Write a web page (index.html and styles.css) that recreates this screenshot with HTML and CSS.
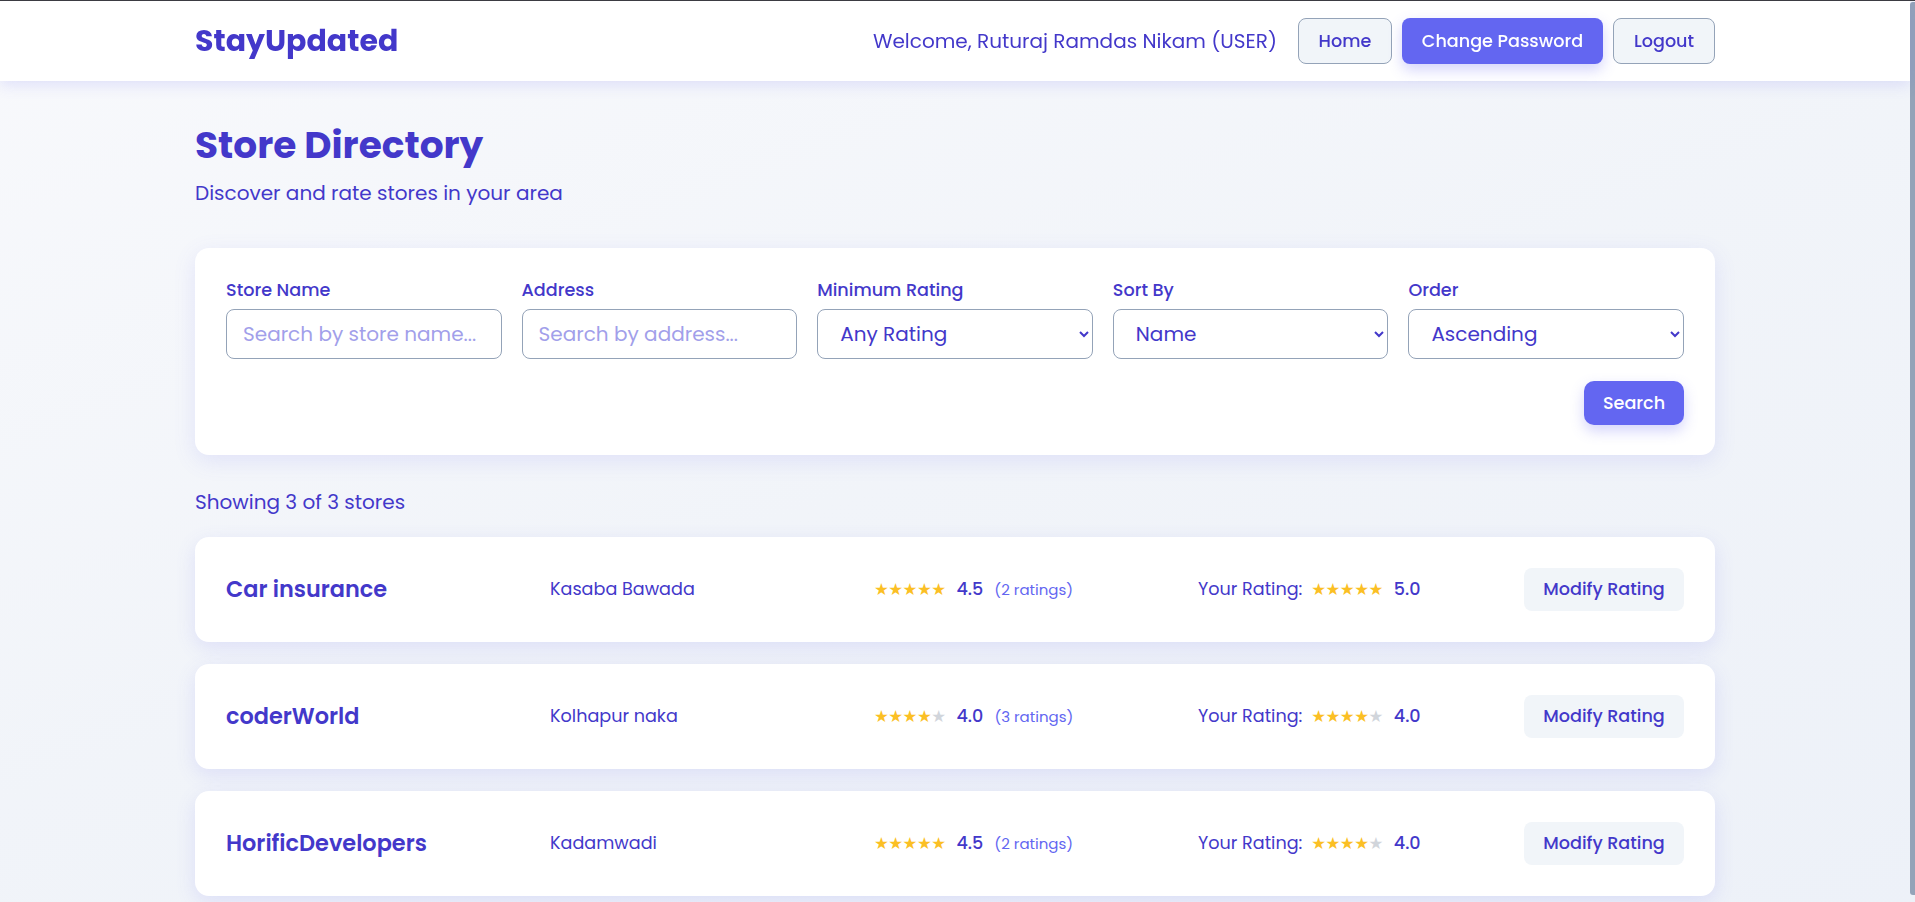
FILE: index.html
```html
<!DOCTYPE html>
<html lang="en">
<head>
<meta charset="utf-8">
<title>StayUpdated - Store Directory</title>
<link rel="stylesheet" href="styles.css">
</head>
<body>
<header class="navbar">
  <div class="nav-inner">
    <div class="logo">StayUpdated</div>
    <div class="nav-right">
      <span class="welcome">Welcome, Ruturaj Ramdas Nikam (USER)</span>
      <button class="btn btn-outline btn-home">Home</button>
      <button class="btn btn-primary btn-pass">Change Password</button>
      <button class="btn btn-outline btn-logout">Logout</button>
    </div>
  </div>
</header>

<main class="container">
  <h1 class="title">Store Directory</h1>
  <p class="subtitle">Discover and rate stores in your area</p>

  <section class="filter-card">
    <div class="filter-grid">
      <div class="field">
        <label class="label">Store Name</label>
        <input class="input" type="text" placeholder="Search by store name...">
      </div>
      <div class="field">
        <label class="label">Address</label>
        <input class="input" type="text" placeholder="Search by address...">
      </div>
      <div class="field">
        <label class="label">Minimum Rating</label>
        <select class="input select"><option>Any Rating</option></select>
      </div>
      <div class="field">
        <label class="label">Sort By</label>
        <select class="input select"><option>Name</option></select>
      </div>
      <div class="field">
        <label class="label">Order</label>
        <select class="input select"><option>Ascending</option></select>
      </div>
    </div>
    <div class="filter-actions">
      <button class="btn btn-primary btn-search">Search</button>
    </div>
  </section>

  <p class="count">Showing 3 of 3 stores</p>

  <div class="store-list">
    <div class="store-card">
      <div class="store-name">Car insurance</div>
      <div class="store-address">Kasaba Bawada</div>
      <div class="rating"><span class="stars">★★★★★</span><span class="rating-value">4.5</span><span class="rating-count">(2 ratings)</span></div>
      <div class="your-rating"><span class="your-label">Your Rating:</span><span class="stars">★★★★★</span><span class="rating-value">5.0</span></div>
      <button class="btn btn-modify">Modify Rating</button>
    </div>
    <div class="store-card">
      <div class="store-name">coderWorld</div>
      <div class="store-address">Kolhapur naka</div>
      <div class="rating"><span class="stars">★★★★<span class="empty">★</span></span><span class="rating-value">4.0</span><span class="rating-count">(3 ratings)</span></div>
      <div class="your-rating"><span class="your-label">Your Rating:</span><span class="stars">★★★★<span class="empty">★</span></span><span class="rating-value">4.0</span></div>
      <button class="btn btn-modify">Modify Rating</button>
    </div>
    <div class="store-card">
      <div class="store-name">HorificDevelopers</div>
      <div class="store-address">Kadamwadi</div>
      <div class="rating"><span class="stars">★★★★★</span><span class="rating-value">4.5</span><span class="rating-count">(2 ratings)</span></div>
      <div class="your-rating"><span class="your-label">Your Rating:</span><span class="stars">★★★★<span class="empty">★</span></span><span class="rating-value">4.0</span></div>
      <button class="btn btn-modify">Modify Rating</button>
    </div>
  </div>
</main>
<div class="scroll-thumb"></div>
</body>
</html>
```
FILE: styles.css
```css
html {
  border-top: 1px solid #3b3b42;
  overflow: hidden;
}
* {
  box-sizing: border-box;
}
body {
  margin: 0;
  padding-right: 5px;
  min-height: 901px;
  font-family: "Poppins", "Inter", "Liberation Sans", sans-serif;
  color: #4338ca;
  background: linear-gradient(160deg, #f8f9fc 0%, #f1f4f9 50%, #edf1f8 100%);
}
.scroll-thumb {
  position: fixed;
  top: 2px;
  right: 0;
  width: 5px;
  height: 893px;
  background: #94a3b8;
  border-radius: 3px 0 0 3px;
}
.navbar {
  height: 80px;
  background: #ffffff;
  box-shadow: 0 4px 14px rgba(99, 102, 241, 0.16);
  position: relative;
  z-index: 1;
}
.nav-inner {
  max-width: 1600px;
  height: 100%;
  margin: 0 auto;
  padding: 0 40px;
  display: flex;
  align-items: center;
  justify-content: space-between;
}
.logo {
  font-size: 30px;
  font-weight: 700;
  color: #4338ca;
}
.nav-right {
  display: flex;
  align-items: center;
  gap: 10px;
}
.welcome {
  font-size: 20px;
  color: #4338ca;
  margin-right: 11px;
}
.btn {
  font-family: inherit;
  font-size: 17.6px;
  font-weight: 500;
  border-radius: 8px;
  cursor: pointer;
  padding: 0;
}
.btn-outline {
  height: 46px;
  background: #f1f5f9;
  color: #4338ca;
  border: 1px solid #94a3b8;
}
.btn-home { width: 94px; }
.btn-logout { width: 102px; }
.btn-primary {
  background: #6366f1;
  color: #ffffff;
  border: none;
  box-shadow: 0 6px 14px rgba(99, 102, 241, 0.28);
}
.btn-pass {
  height: 46px;
  width: 201px;
}
.container {
  max-width: 1600px;
  margin: 0 auto;
  padding: 0 40px 15px;
}
.title {
  margin: 0;
  padding-top: 39px;
  font-size: 37.5px;
  line-height: 50px;
  font-weight: 700;
  color: #4338ca;
}
.subtitle {
  margin: 9px 0 0;
  font-size: 20px;
  line-height: 28px;
  color: #4338ca;
}
.filter-card {
  margin-top: 41px;
  background: #ffffff;
  border-radius: 14px;
  padding: 30px 31px 30px;
  box-shadow: 0 6px 22px rgba(99, 102, 241, 0.13);
}
.filter-grid {
  display: grid;
  grid-template-columns: repeat(5, minmax(0, 1fr));
  gap: 20px;
}
.field {
  display: flex;
  flex-direction: column;
  gap: 8px;
  min-width: 0;
}
.label {
  margin-top: 1px;
  font-size: 17.6px;
  font-weight: 500;
  line-height: 22px;
  color: #4338ca;
}
.input {
  width: 100%;
  height: 50px;
  border: 1px solid #94a3b8;
  border-radius: 8px;
  background: #ffffff;
  padding: 0 16px;
  font-family: inherit;
  font-size: 20px;
  color: #4338ca;
  outline: none;
}
.input::placeholder {
  color: #a29fea;
}
.select {
  padding-left: 18px;
}
.filter-actions {
  display: flex;
  justify-content: flex-end;
  margin-top: 22px;
}
.btn-search {
  width: 100px;
  height: 44px;
  border-radius: 10px;
}
.count {
  margin: 34px 0 0;
  font-size: 20px;
  line-height: 26px;
  color: #4338ca;
}
.store-list {
  margin-top: 22px;
  display: flex;
  flex-direction: column;
  gap: 22px;
}
.store-card {
  height: 105px;
  background: #ffffff;
  border-radius: 14px;
  padding: 0 31px 1px;
  display: grid;
  grid-template-columns: 2fr 2fr 2fr 2fr 1fr;
  align-items: center;
  box-shadow: 0 6px 20px rgba(99, 102, 241, 0.14);
}
.store-name {
  font-size: 22.4px;
  font-weight: 600;
  color: #4338ca;
}
.store-address {
  font-size: 17.6px;
  color: #4338ca;
}
.rating, .your-rating {
  display: flex;
  align-items: center;
}
.stars {
  font-family: "DejaVu Sans", sans-serif;
  font-size: 16.5px;
  color: #fbbf24;
  letter-spacing: -0.5px;
}
.stars .empty {
  color: #d1d5db;
}
.rating-value {
  margin-left: 11px;
  font-size: 17.6px;
  font-weight: 500;
  color: #4338ca;
}
.rating-count {
  margin-left: 11px;
  font-size: 15px;
  color: #6366f1;
}
.your-label {
  font-size: 17.6px;
  margin-right: 9px;
}
.btn-modify {
  justify-self: end;
  width: 160px;
  height: 43px;
  border: none;
  background: #f1f5f9;
  color: #4338ca;
}
```
